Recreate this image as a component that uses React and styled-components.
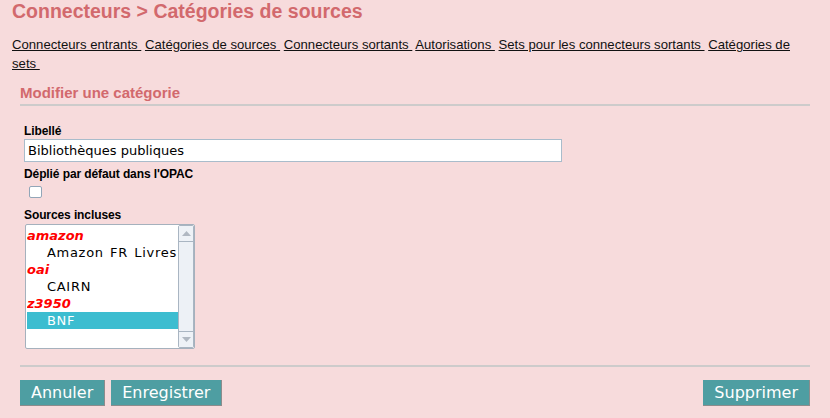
import React from "react";
import styled, { createGlobalStyle } from "styled-components";

const GlobalStyle = createGlobalStyle`
  html, body { margin: 0; padding: 0; background: #f7dbdc; }
  body { font-family: "Liberation Sans", Arial, sans-serif; color: #000; }
`;

const Page = styled.div`
  padding: 0 20px 0 12px;
`;

const Title = styled.h1`
  margin: 0;
  font-family: "Liberation Sans", Arial, sans-serif;
  font-size: 19.5px;
  line-height: 22px;
  font-weight: bold;
  color: #d2696d;
`;

const Nav = styled.nav`
  margin-top: 13px;
  font-family: "Liberation Sans", Arial, sans-serif;
  font-size: 13.15px;
  line-height: 19px;
`;

const NavLink = styled.a`
  color: #111;
  text-decoration: underline;
  cursor: pointer;
`;

const Form = styled.form`
  margin: 11px 0 0 8px;
`;

const SectionTitle = styled.h2`
  margin: 0 0 2px 0;
  font-size: 15px;
  line-height: 18px;
  font-weight: bold;
  color: #d2696d;
`;

const Rule = styled.div`
  height: 2px;
  background: #cdcbcb;
  margin-top: ${(p) => p.$top || 0}px;
`;

const Fields = styled.div`
  padding: 18px 0 0 4px;
  display: flex;
  flex-direction: column;
  align-items: flex-start;
`;

const Label = styled.label`
  display: block;
  font-size: 12px;
  line-height: 14px;
  font-weight: bold;
  letter-spacing: -0.1px;
  margin-top: ${(p) => p.$top || 0}px;
`;

const TextInput = styled.input`
  box-sizing: border-box;
  margin-top: 1px;
  width: 538px;
  height: 23px;
  padding: 0 3px;
  border: 1px solid #a9bccb;
  background: #fff;
  font-family: "DejaVu Sans", Verdana, sans-serif;
  font-size: 13px;
  color: #000;
  outline: none;
`;

const Check = styled.input`
  appearance: none;
  box-sizing: border-box;
  margin: 5px 0 0 5px;
  width: 13px;
  height: 12px;
  border: 1px solid #92a6b8;
  border-radius: 2px;
  background: #fff;
`;

const ListBox = styled.div`
  box-sizing: border-box;
  margin: 2px 0 0 1px;
  width: 170px;
  height: 125px;
  border: 1px solid #a5b1bd;
  border-radius: 2px;
  background: #fff;
  display: flex;
  padding: 0 0 0 1px;
`;

const Rows = styled.div`
  flex: 1;
  padding-top: 2px;
  overflow: hidden;
`;

const Group = styled.div`
  height: 17px;
  line-height: 17px;
  font-family: "DejaVu Sans", Verdana, sans-serif;
  font-size: 13px;
  font-weight: bold;
  font-style: italic;
  color: #ff0000;
  white-space: nowrap;
`;

const Option = styled.div`
  height: 17px;
  line-height: 17px;
  padding-left: 20px;
  font-family: "DejaVu Sans", Verdana, sans-serif;
  font-size: 13px;
  letter-spacing: 0.7px;
  word-spacing: 1.5px;
  white-space: nowrap;
  overflow: hidden;
  color: ${(p) => (p.$selected ? "#fff" : "#000")};
  background: ${(p) => (p.$selected ? "#3cbdd0" : "transparent")};
`;

const Scrollbar = styled.div`
  box-sizing: border-box;
  width: 16px;
  margin: 0;
  border: 1px solid #a9b5c2;
  border-radius: 2px;
  background: #edf1f6;
  display: flex;
  flex-direction: column;
  justify-content: space-between;
`;

const Arrow = styled.div`
  height: 15px;
  display: flex;
  align-items: center;
  justify-content: center;
  background: #eef2f7;
  border-${(p) => (p.$down ? "top" : "bottom")}: 1px solid #a9b5c2;
`;

const Actions = styled.div`
  margin-top: 13px;
  display: flex;
  justify-content: space-between;
  align-items: flex-start;
`;

const ButtonGroup = styled.div`
  display: flex;
  gap: 6px;
`;

const Button = styled.button`
  height: 26px;
  padding: 0 11px;
  border: none;
  border-right: 1px solid #8c8c8c;
  border-bottom: 1px solid #8c8c8c;
  background: #4e9ea2;
  color: #fff;
  font-family: "DejaVu Sans", Verdana, sans-serif;
  font-size: 16px;
  line-height: 25px;
  cursor: pointer;
`;

const Tri = ({ down }) => (
  <svg width="9" height="6" viewBox="0 0 9 6">
    <path d={down ? "M0 0 L9 0 L4.5 5 Z" : "M0 5 L9 5 L4.5 0 Z"} fill="#b0b8c2" />
  </svg>
);

const links = [
  "Connecteurs entrants",
  "Catégories de sources",
  "Connecteurs sortants",
  "Autorisations",
  "Sets pour les connecteurs sortants",
  "Catégories de sets",
];

const sources = [
  { group: "amazon", items: ["Amazon FR Livres"] },
  { group: "oai", items: ["CAIRN"] },
  { group: "z3950", items: ["BNF"] },
];

export default function App() {
  return (
    <>
      <GlobalStyle />
      <Page>
        <Title>Connecteurs &gt; Catégories de sources</Title>
        <Nav>
          {links.map((l, i) => (
            <React.Fragment key={l}>
              <NavLink>{l + "\u00a0"}</NavLink>
              {i < links.length - 1 ? " " : ""}
            </React.Fragment>
          ))}
        </Nav>
        <Form onSubmit={(e) => e.preventDefault()}>
          <SectionTitle>Modifier une catégorie</SectionTitle>
          <Rule />
          <Fields>
            <Label>Libellé</Label>
            <TextInput defaultValue="Bibliothèques publiques" />
            <Label $top={5}>Déplié par défaut dans l'OPAC</Label>
            <Check type="checkbox" />
            <Label $top={10}>Sources incluses</Label>
            <ListBox>
              <Rows>
                {sources.map((s) => (
                  <React.Fragment key={s.group}>
                    <Group>{s.group}</Group>
                    {s.items.map((it) => (
                      <Option key={it} $selected={it === "BNF"}>
                        {it}
                      </Option>
                    ))}
                  </React.Fragment>
                ))}
              </Rows>
              <Scrollbar>
                <Arrow>
                  <Tri />
                </Arrow>
                <Arrow $down>
                  <Tri down />
                </Arrow>
              </Scrollbar>
            </ListBox>
          </Fields>
          <Rule $top={16} />
          <Actions>
            <ButtonGroup>
              <Button type="button">Annuler</Button>
              <Button type="button">Enregistrer</Button>
            </ButtonGroup>
            <Button type="button">Supprimer</Button>
          </Actions>
        </Form>
      </Page>
    </>
  );
}
